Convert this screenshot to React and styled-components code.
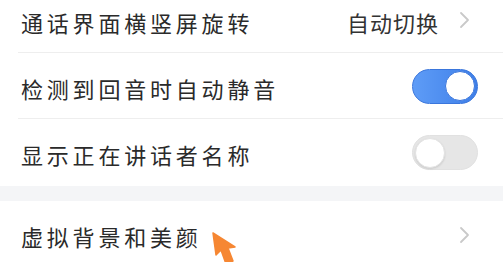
import React from 'react'
import styled, { createGlobalStyle } from 'styled-components'

const Global = createGlobalStyle`
  html, body {
    margin: 0;
    padding: 0;
    background: #ffffff;
    overflow: hidden;
  }
  body {
    font-family: "Noto Sans CJK SC", "Noto Sans", sans-serif;
  }
`

function Chevron() {
  return (
    <ChevronIcon width="12" height="18" viewBox="0 0 12 18">
      <path d="M3 2 L10 9 L3 16" fill="none" stroke="#c9c9c9" strokeWidth="1.8" strokeLinecap="round" strokeLinejoin="round" />
    </ChevronIcon>
  )
}

function Cursor() {
  return (
    <CursorIcon width="30" height="34" viewBox="0 0 30 34">
      <polygon points="1,1 4,23 9,18 14,32 21,29 16,16 23,15" fill="#f68733" stroke="#f68733" strokeWidth="1.5" strokeLinejoin="round" />
    </CursorIcon>
  )
}

function App() {
  return (
    <Page>
      <Global />
      <Group>
        <Row>
          <Label>通话界面横竖屏旋转</Label>
          <Right>
            <Value>自动切换</Value>
            <Chevron />
          </Right>
        </Row>
        <Row>
          <Label>检测到回音时自动静音</Label>
          <Toggle on>
            <Knob on />
          </Toggle>
        </Row>
        <Row last>
          <Label>显示正在讲话者名称</Label>
          <Toggle>
            <Knob />
          </Toggle>
        </Row>
      </Group>
      <Band />
      <Group>
        <Row last>
          <Label>虚拟背景和美颜</Label>
          <Right>
            <Chevron />
          </Right>
          <Cursor />
        </Row>
      </Group>
    </Page>
  )
}

export default App

const Page = styled.div`
  width: 503px;
  height: 262px;
  overflow: hidden;
  background: #ffffff;
`

const Group = styled.div`
  display: flex;
  flex-direction: column;
  &:first-child {
    margin-top: -13px;
  }
`

const Row = styled.div`
  position: relative;
  height: 65px;
  display: flex;
  align-items: center;
  justify-content: space-between;
  padding: 0 25px 0 21px;
  border-bottom: ${p => (p.last ? 'none' : '1px solid #efefef')};
  margin-left: 0;
  ${p => !p.last && `
    border-bottom: none;
    &::after {
      content: "";
      position: absolute;
      left: 18px;
      right: 0;
      bottom: 0;
      height: 1px;
      background: #eeeeee;
    }
    height: 66px;
  `}
  ${p => p.last && `height: 67px;`}
`

const Label = styled.div`
  font-size: 22px;
  letter-spacing: 3.8px;
  color: #2a2a2a;
  line-height: 1;
  padding-top: 3px;
`

const Right = styled.div`
  display: flex;
  align-items: center;
  gap: 19px;
  padding-right: 8px;
`

const Value = styled.div`
  font-size: 22px;
  letter-spacing: 1px;
  color: #333333;
  line-height: 1;
  padding-top: 3px;
`

const ChevronIcon = styled.svg`
  display: block;
`

const Toggle = styled.div`
  width: 66px;
  height: 35px;
  border-radius: 18px;
  box-sizing: border-box;
  display: flex;
  align-items: center;
  justify-content: ${p => (p.on ? 'flex-end' : 'flex-start')};
  padding: 0 2px;
  background: ${p => (p.on ? 'linear-gradient(90deg, #5e9cf7, #3e7fe8)' : '#e6e6e6')};
  border: ${p => (p.on ? '1px solid #3a76dc' : '1px solid #e1e1e1')};
`

const Knob = styled.div`
  width: 30px;
  height: 30px;
  border-radius: 50%;
  background: #ffffff;
  box-sizing: border-box;
  border: ${p => (p.on ? '1px solid #3a76dc' : '1px solid #e3e3e3')};
  box-shadow: ${p => (p.on ? 'none' : '0 1px 2px rgba(0,0,0,0.12)')};
`

const Band = styled.div`
  height: 15px;
  background: #f4f5f7;
`

const CursorIcon = styled.svg`
  position: absolute;
  left: 212px;
  top: 31px;
  filter: blur(0.6px);
`
